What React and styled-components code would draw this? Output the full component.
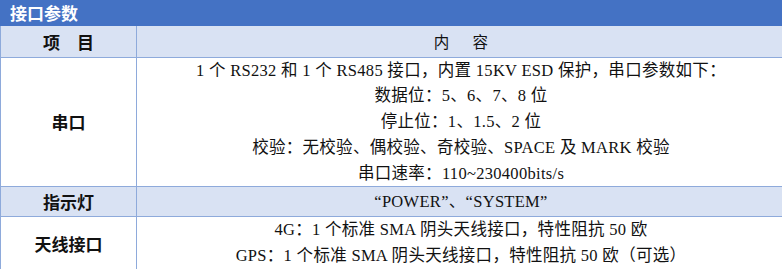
import { createGlobalStyle, styled } from "styled-components";

const GlobalStyle = createGlobalStyle`
  html, body {
    margin: 0;
    padding: 0;
    background: #ffffff;
    overflow: hidden;
  }
  body {
    font-family: "Liberation Serif", "Noto Sans CJK SC", serif;
    color: #111111;
  }
`;

const rows = [
  {
    label: "串口",
    lines: [
      "1 个 RS232 和 1 个 RS485 接口，内置 15KV ESD 保护，串口参数如下：",
      "数据位：5、6、7、8 位",
      "停止位：1、1.5、2 位",
      "校验：无校验、偶校验、奇校验、SPACE 及 MARK 校验",
      "串口速率：110~230400bits/s",
    ],
  },
  { label: "指示灯", lines: ["“POWER”、“SYSTEM”"], shaded: true },
  {
    label: "天线接口",
    lines: [
      "4G：1 个标准 SMA 阴头天线接口，特性阻抗 50 欧",
      "GPS：1 个标准 SMA 阴头天线接口，特性阻抗 50 欧（可选）",
    ],
  },
];

export default function App() {
  return (
    <>
      <GlobalStyle />
      <Sheet>
        <TitleBar>接口参数</TitleBar>
        <Table>
          <colgroup>
            <col style={{ width: "136px" }} />
            <col />
          </colgroup>
          <tbody>
            <HeadRow>
              <LabelCell>项&emsp;目</LabelCell>
              <HeadCell>内&emsp;&ensp;容</HeadCell>
            </HeadRow>
            {rows.map((row) => (
              <BodyRow key={row.label} $shaded={row.shaded}>
                <LabelCell>{row.label}</LabelCell>
                <ContentCell $single={row.lines.length === 1}>
                  {row.lines.map((line) => (
                    <Line key={line}>{line}</Line>
                  ))}
                </ContentCell>
              </BodyRow>
            ))}
          </tbody>
        </Table>
      </Sheet>
    </>
  );
}

const Sheet = styled.div`
  width: 786px;
`;

const TitleBar = styled.div`
  height: 26px;
  line-height: 26px;
  padding-left: 10px;
  background-color: #4472c4;
  color: #ffffff;
  font-family: "Noto Sans CJK SC", sans-serif;
  font-weight: 700;
  font-size: 17px;
`;

const Table = styled.table`
  width: 100%;
  border-collapse: collapse;
  table-layout: fixed;

  td {
    border: 1px solid #8eaadb;
    padding: 0;
    text-align: center;
    vertical-align: middle;
  }
`;

const HeadRow = styled.tr`
  height: 31px;
  background-color: #d9e2f3;

  td {
    border-top: none;
  }
`;

const BodyRow = styled.tr`
  background-color: ${(props) => (props.$shaded ? "#d9e2f3" : "#ffffff")};
`;

const LabelCell = styled.td`
  font-family: "Noto Sans CJK SC", sans-serif;
  font-weight: 700;
  font-size: 17px;
  color: #111111;
`;

const HeadCell = styled.td`
  font-family: "Noto Sans CJK SC", sans-serif;
  font-size: 15.5px;
  color: #111111;
`;

const ContentCell = styled.td`
  font-size: 16.5px;
  letter-spacing: 0.3px;
  height: ${(props) => (props.$single ? "29px" : "auto")};
`;

const Line = styled.div`
  line-height: 25.8px;
  white-space: nowrap;
`;
